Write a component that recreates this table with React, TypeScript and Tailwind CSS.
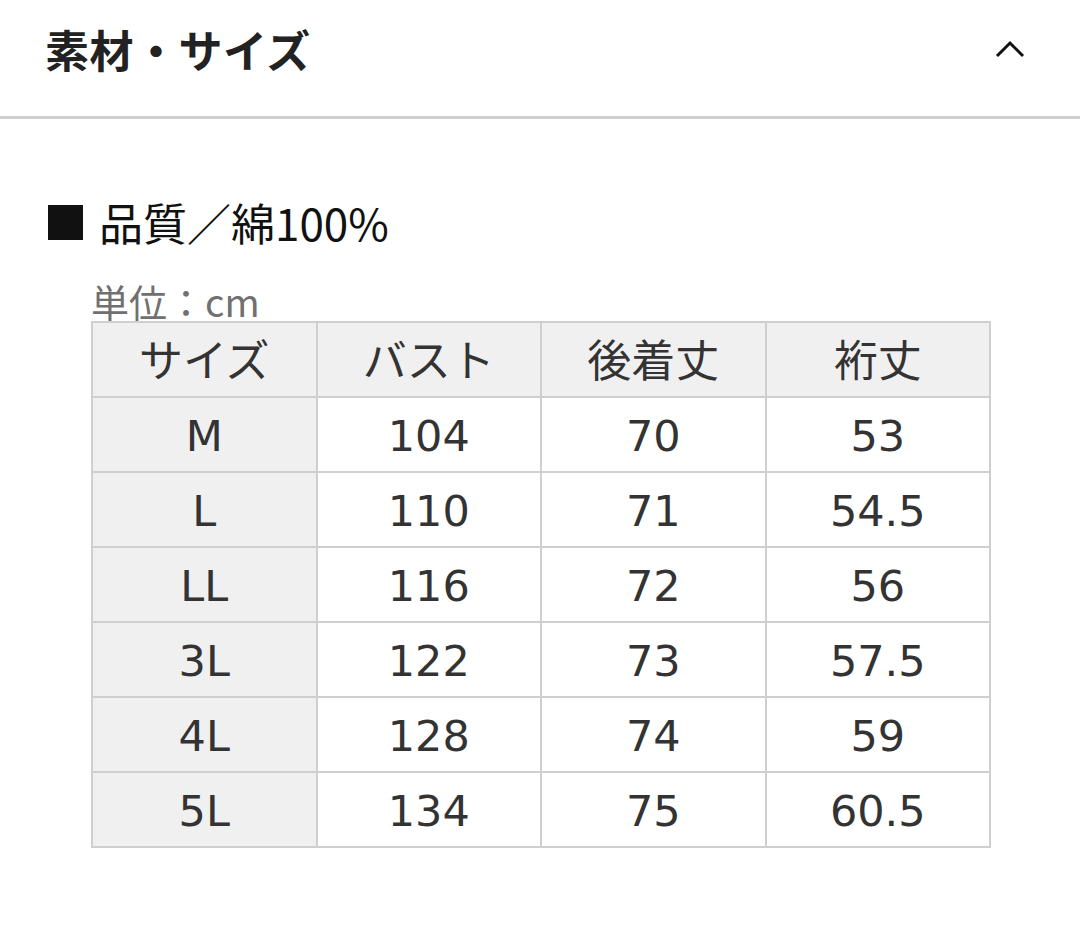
const headers = ["サイズ", "バスト", "後着丈", "裄丈"];

const rows = [
  ["M", "104", "70", "53"],
  ["L", "110", "71", "54.5"],
  ["LL", "116", "72", "56"],
  ["3L", "122", "73", "57.5"],
  ["4L", "128", "74", "59"],
  ["5L", "134", "75", "60.5"],
];

const font = { fontFamily: '"DejaVu Sans", "Noto Sans CJK JP", sans-serif' };
const jp = { fontFamily: '"Noto Sans CJK JP", sans-serif' };

export default function App() {
  return (
    <div className="w-[1080px] h-[944px] bg-white text-[#222]" style={font}>
      {/* accordion header */}
      <div className="h-[119px] flex items-center justify-between pl-[45px] pr-[54px] pb-[18px] border-b-[3px] border-[#cfcfcf]">
        <h2 className="text-[44px] font-bold leading-none tracking-[0.5px]" style={jp}>
          素材・サイズ
        </h2>
        <svg width="32" height="20" viewBox="0 0 32 20" fill="none">
          <path d="M3 17 L16 4 L29 17" stroke="#111" strokeWidth="3" />
        </svg>
      </div>

      <div className="pt-[78px]">
        <p
          className="flex items-center h-[50px] pl-[48px] text-[44px] text-[#111] leading-none"
          style={jp}
        >
          <span className="w-[35px] h-[35px] bg-[#111] mr-[16px]" />
          品質／綿100%
        </p>

        <p
          className="mt-[34px] h-[40px] pl-[91px] text-[38px] leading-[40px] text-[#707070]"
          style={jp}
        >
          単位：cm
        </p>

        <div className="ml-[91px] w-[900px] grid grid-cols-4 border-t-2 border-l-2 border-[#cfcfcf] text-[#333]">
          {headers.map((h) => (
            <div
              key={h}
              className="h-[75px] flex items-center justify-center pb-[3px] bg-[#f0f0f0] border-r-2 border-b-2 border-[#cfcfcf] text-[44px]"
              style={jp}
            >
              {h}
            </div>
          ))}
          {rows.map((r) =>
            r.map((c, i) => (
              <div
                key={r[0] + i}
                className={
                  "h-[75px] flex items-center justify-center pt-[3px] border-r-2 border-b-2 border-[#cfcfcf] text-[43px] " +
                  (i === 0 ? "bg-[#f0f0f0]" : "bg-white")
                }
              >
                {c}
              </div>
            ))
          )}
        </div>
      </div>
    </div>
  );
}
